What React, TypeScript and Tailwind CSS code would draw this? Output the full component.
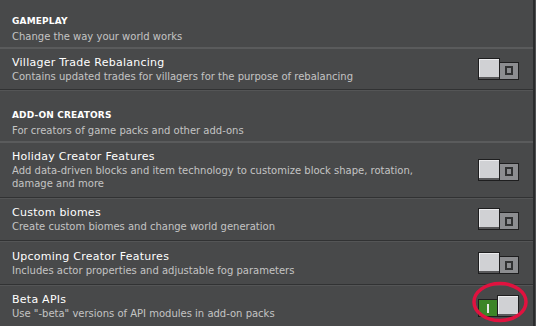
import React from "react";

const font = { fontFamily: '"DejaVu Sans", sans-serif' };

function Toggle({ on }: { on?: boolean }) {
  if (on) {
    return (
      <div className="flex items-end h-[22px]">
        <div className="w-[20px] h-[18px] bg-[#3c8527] border border-[#1e1e1f] flex items-center justify-center">
          <div className="w-[2px] h-[9px] bg-[#e6e6e6]" />
        </div>
        <div className="w-[22px] h-[22px] -ml-[1px] bg-[#58585a] border border-[#1e1e1f] flex flex-col">
          <div className="flex-1 bg-[#d0d1d4] border-t border-l border-[#ececee]" />
          <div className="h-[2px]" />
        </div>
      </div>
    );
  }
  return (
    <div className="flex items-end h-[22px]">
      <div className="w-[22px] h-[22px] bg-[#58585a] border border-[#1e1e1f] flex flex-col z-10">
        <div className="flex-1 bg-[#d0d1d4] border-t border-l border-[#ececee]" />
        <div className="h-[2px]" />
      </div>
      <div className="w-[20px] h-[18px] -ml-[1px] bg-[#8c8d90] border border-[#1e1e1f] flex items-center justify-center">
        <div className="w-[8px] h-[9px] border-2 border-[#303132]" />
      </div>
    </div>
  );
}

function Header({ title, desc, pt }: { title: string; desc: string; pt: string }) {
  return (
    <div className={`px-[12px] ${pt} pb-[4px]`}>
      <div className="text-[9px] leading-[14px] font-bold text-white tracking-[0.15px]">{title}</div>
      <div className="text-[10px] leading-[13px] text-[#c4c4c4] mt-[2px]">{desc}</div>
    </div>
  );
}

function Row({ title, desc, h, on }: { title: string; desc: React.ReactNode; h: string; on?: boolean }) {
  return (
    <div className={`flex items-center pl-[12px] pr-[14px] ${h}`}>
      <div className="flex-1 pt-[1px]">
        <div className="text-[11px] leading-[14px] text-white tracking-[0.25px]">{title}</div>
        <div className="text-[10px] leading-[13px] text-[#c4c4c4]">{desc}</div>
      </div>
      <Toggle on={on} />
    </div>
  );
}

function LightSep() {
  return <div className="h-[2px] bg-[#5a5b5c]" />;
}
function DarkSep() {
  return (
    <div className="flex flex-col">
      <div className="h-[1px] bg-[#313233]" />
      <div className="h-[1px] bg-[#545556]" />
    </div>
  );
}

export default function App() {
  return (
    <div className="w-[536px] h-[326px] bg-[#48494a] overflow-hidden flex relative" style={font}>
      <div className="w-[533px] flex flex-col">
        <Header title="GAMEPLAY" desc="Change the way your world works" pt="pt-[14px]" />
        <LightSep />
        <Row title="Villager Trade Rebalancing" desc="Contains updated trades for villagers for the purpose of rebalancing" h="h-[40px]" />
        <DarkSep />
        <Header title="ADD-ON CREATORS" desc="For creators of game packs and other add-ons" pt="pt-[17px]" />
        <LightSep />
        <Row
          title="Holiday Creator Features"
          desc={<>Add data-driven blocks and item technology to customize block shape, rotation,<br />damage and more</>}
          h="h-[54px]"
        />
        <DarkSep />
        <Row title="Custom biomes" desc="Create custom biomes and change world generation" h="h-[42px]" />
        <DarkSep />
        <Row title="Upcoming Creator Features" desc="Includes actor properties and adjustable fog parameters" h="h-[42px]" />
        <DarkSep />
        <Row title="Beta APIs" desc={'Use "-beta" versions of API modules in add-on packs'} h="h-[40px]" on />
      </div>
      <div className="w-[2px] bg-[#2b2c2d]" />
      <div className="w-[1px] bg-[#4f5051]" />
      <svg className="absolute left-[471px] top-[281px]" width="60" height="44" viewBox="0 0 60 44">
        <ellipse cx="29" cy="21" rx="26" ry="18.5" fill="none" stroke="#e0123f" strokeWidth="3.5" />
      </svg>
    </div>
  );
}
